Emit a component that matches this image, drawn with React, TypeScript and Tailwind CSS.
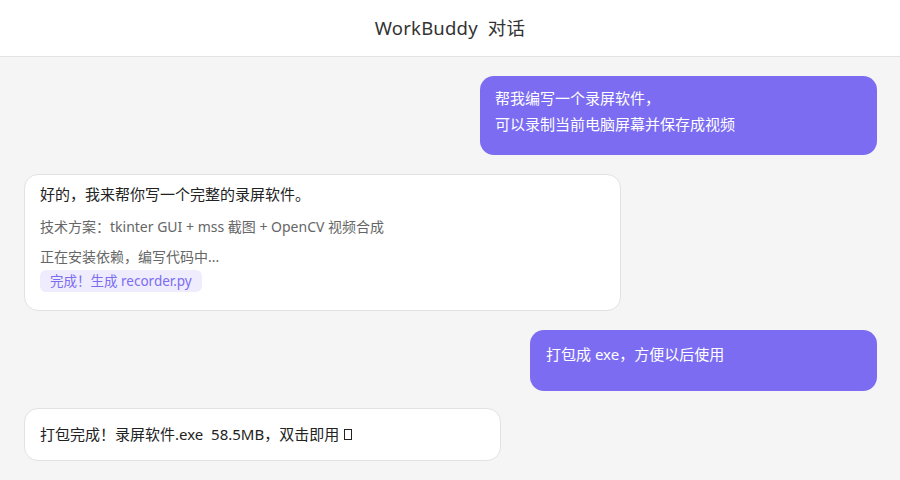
export default function App() {
  const font = { fontFamily: '"Noto Sans", "Noto Sans CJK SC", sans-serif' };
  return (
    <div className="w-[900px] h-[480px] bg-[#f5f5f5] flex flex-col overflow-hidden" style={font}>
      <div className="h-[57px] shrink-0 bg-white border-b border-[#e3e3e3] flex items-center justify-center">
        <span className="text-[18.5px] text-[#333333] tracking-[0.2px]">WorkBuddy&nbsp; 对话</span>
      </div>
      <div className="flex flex-col px-[23px] pt-[19px]">
        <div className="flex justify-end">
          <div className="w-[397px] h-[79px] bg-[#7b6cf1] rounded-[14px] pl-[15px] pt-[9px] text-white text-[15px] leading-[26px]">
            <div>帮我编写一个录屏软件，</div>
            <div>可以录制当前电脑屏幕并保存成视频</div>
          </div>
        </div>
        <div className="flex justify-start mt-[19px]">
          <div className="w-[597px] h-[137px] ml-[1px] bg-white border border-[#e2e2e2] rounded-[14px] pl-[15px] pt-[8px]">
            <div className="text-[15px] leading-[22px] text-[#222222]">好的，我来帮你写一个完整的录屏软件。</div>
            <div className="mt-[12px] text-[14px] leading-[20px] text-[#666666]">技术方案：tkinter GUI + mss 截图 + OpenCV 视频合成</div>
            <div className="mt-[10px] text-[14px] leading-[20px] text-[#666666]">正在安装依赖，编写代码中...</div>
            <div className="mt-[3px] inline-flex items-center h-[22px] px-[10px] rounded-[6px] bg-[#efecfd] text-[#7b6cf1] text-[13.5px]">完成！生成 recorder.py</div>
          </div>
        </div>
        <div className="flex justify-end mt-[19px]">
          <div className="w-[347px] h-[61px] bg-[#7b6cf1] rounded-[14px] pl-[16px] pt-[12px] text-white text-[15px] leading-[24px]">
            打包成 exe，方便以后使用
          </div>
        </div>
        <div className="flex justify-start mt-[17px]">
          <div className="w-[477px] h-[53px] ml-[1px] bg-white border border-[#e2e2e2] rounded-[14px] pl-[15px] flex items-center text-[15px] text-[#222222]">
            <span>打包完成！录屏软件.exe&nbsp; 58.5MB，双击即用&nbsp;</span>
            <span className="inline-block w-[8px] h-[11px] border border-[#222222] ml-[1px]"></span>
          </div>
        </div>
      </div>
    </div>
  );
}
